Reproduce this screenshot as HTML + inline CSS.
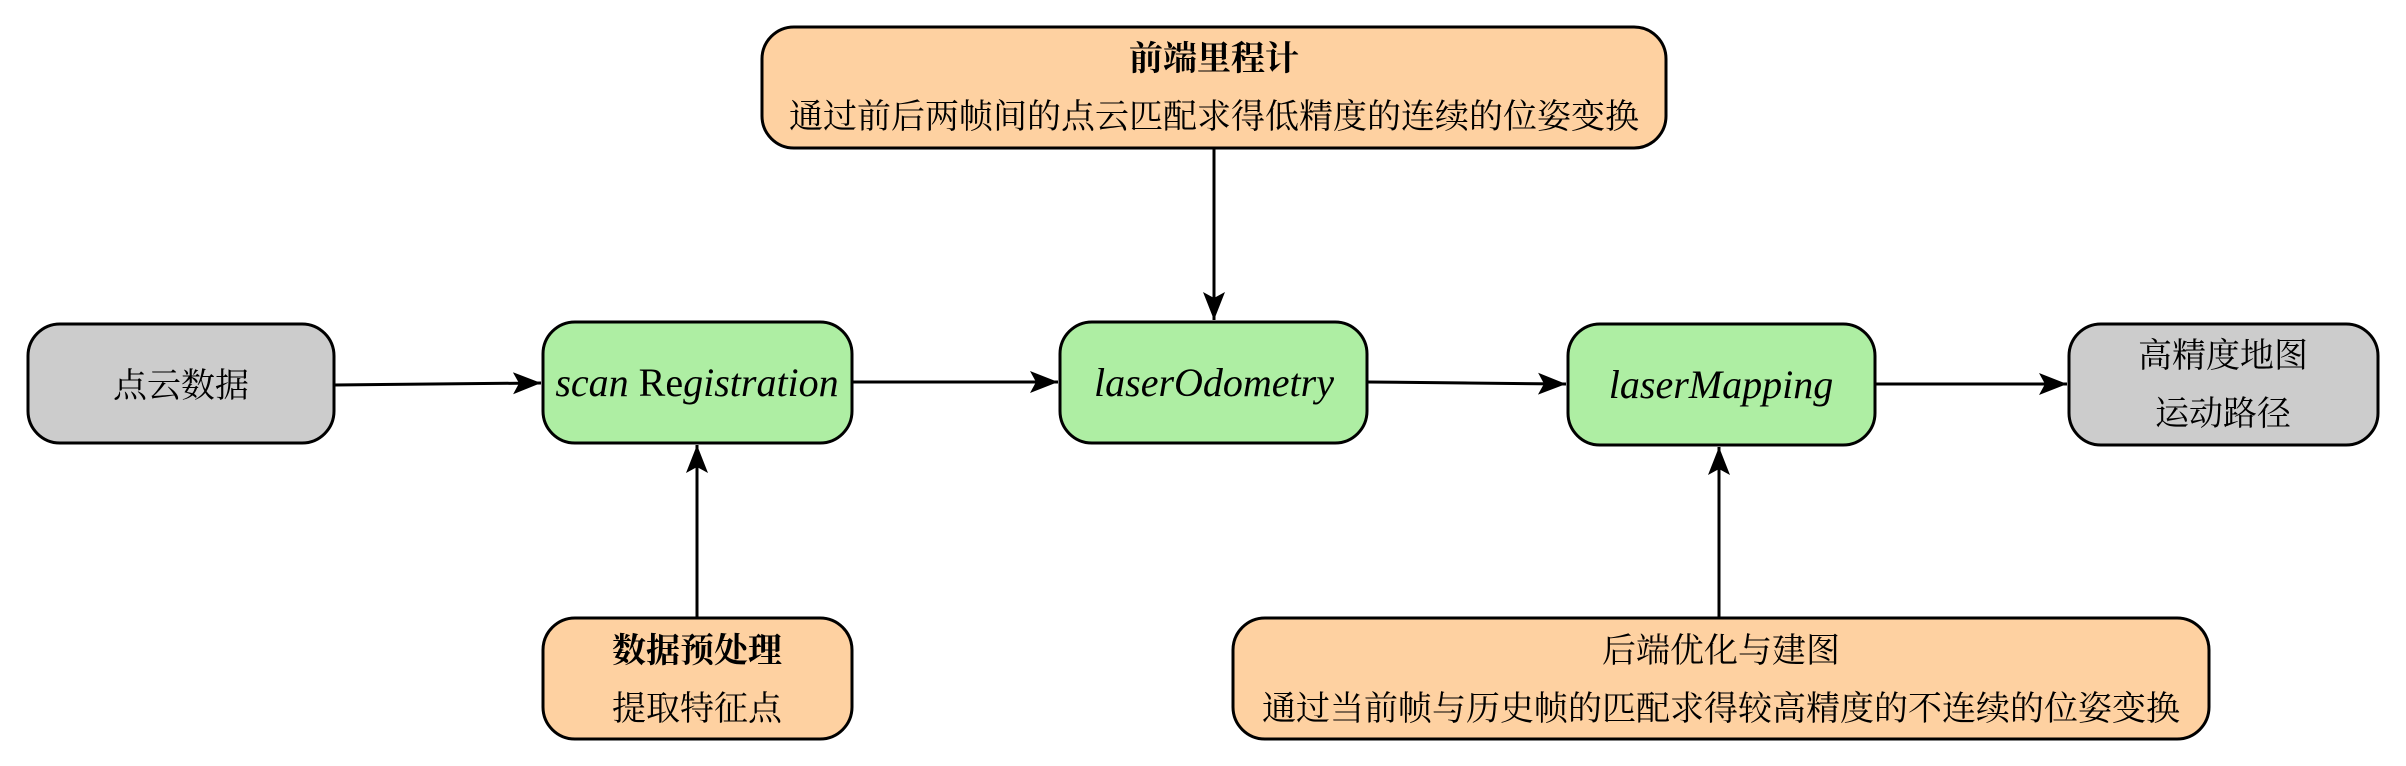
<!DOCTYPE html>
<html><head><meta charset="utf-8"><style>
html,body{margin:0;padding:0;background:#fff;}
svg{display:block;}
.cn{font-family:"Liberation Serif","Noto Serif CJK SC",serif;font-size:34px;fill:#000;}
.b{font-weight:bold;}
.m{font-family:"Liberation Serif",serif;font-style:italic;font-size:40px;fill:#000;}
</style></head><body>
<svg width="2406" height="766" viewBox="0 0 2406 766" xmlns="http://www.w3.org/2000/svg">
<defs>
<marker id="a" markerWidth="30" markerHeight="22" refX="28" refY="11" orient="auto" markerUnits="userSpaceOnUse">
<path d="M0,0 L28,11 L0,22 L6,11 Z" fill="#000"/>
</marker>
</defs>
<g stroke="#000" stroke-width="3" fill="none">
<line x1="334" y1="385" x2="541" y2="383" marker-end="url(#a)"/>
<line x1="852" y1="382" x2="1058" y2="382" marker-end="url(#a)"/>
<line x1="1367" y1="382" x2="1566" y2="384" marker-end="url(#a)"/>
<line x1="1875" y1="384" x2="2067" y2="384" marker-end="url(#a)"/>
<line x1="1214" y1="148" x2="1214" y2="320" marker-end="url(#a)"/>
<line x1="697" y1="618" x2="697" y2="445" marker-end="url(#a)"/>
<line x1="1719" y1="618" x2="1719" y2="447" marker-end="url(#a)"/>
</g>
<g stroke="#000" stroke-width="3">
<rect x="28" y="324" width="306" height="119" rx="32" fill="#cccccc"/>
<rect x="543" y="322" width="309" height="121" rx="32" fill="#aeeea3"/>
<rect x="1060" y="322" width="307" height="121" rx="32" fill="#aeeea3"/>
<rect x="1568" y="324" width="307" height="121" rx="32" fill="#aeeea3"/>
<rect x="2069" y="324" width="309" height="121" rx="32" fill="#cccccc"/>
<rect x="762" y="27" width="904" height="121" rx="32" fill="#fed1a1"/>
<rect x="543" y="618" width="309" height="121" rx="32" fill="#fed1a1"/>
<rect x="1233" y="618" width="976" height="121" rx="32" fill="#fed1a1"/>
</g>
<g text-anchor="middle">
<text class="cn" x="181" y="397">点云数据</text>
<text class="m" x="697" y="396">scan<tspan font-style="normal"> Re</tspan>gistration</text>
<text class="m" x="1214" y="396">laserOdometry</text>
<text class="m" x="1721" y="398">laserMapping</text>
<text class="cn" x="2223" y="367">高精度地图</text>
<text class="cn" x="2223" y="425">运动路径</text>
<text class="cn b" x="1214" y="70">前端里程计</text>
<text class="cn" x="1214" y="128">通过前后两帧间的点云匹配求得低精度的连续的位姿变换</text>
<text class="cn b" x="697" y="662">数据预处理</text>
<text class="cn" x="697" y="720">提取特征点</text>
<text class="cn" x="1721" y="662">后端优化与建图</text>
<text class="cn" x="1721" y="720">通过当前帧与历史帧的匹配求得较高精度的不连续的位姿变换</text>
</g>
</svg>
</body></html>
